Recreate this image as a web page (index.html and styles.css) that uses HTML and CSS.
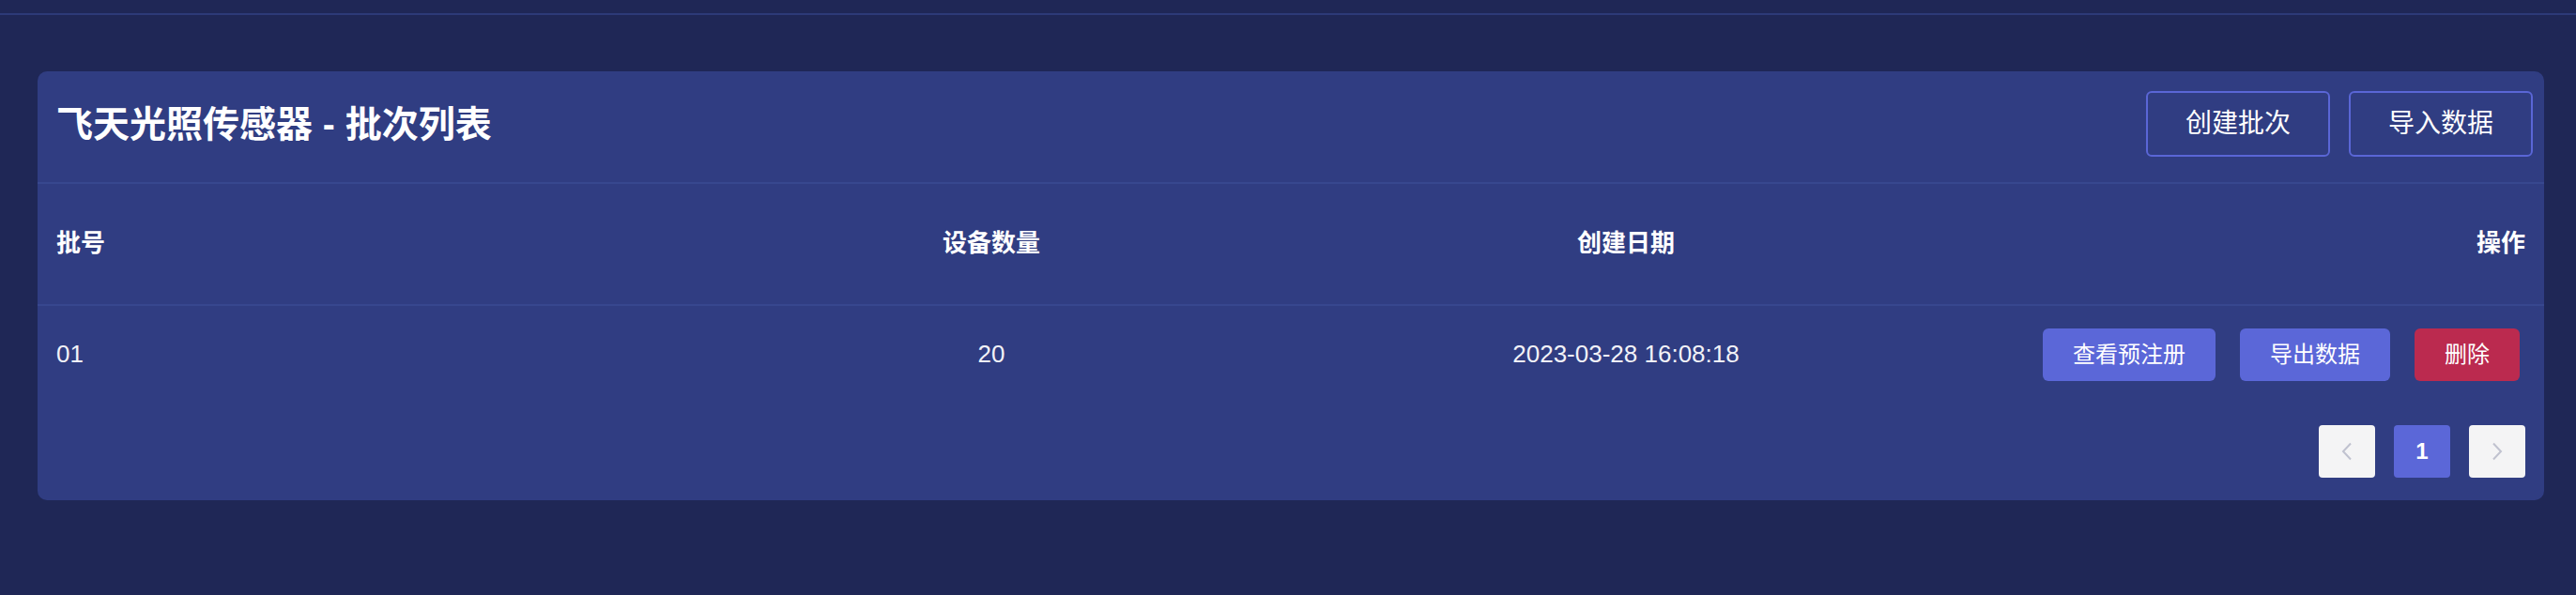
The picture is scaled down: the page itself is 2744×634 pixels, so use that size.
FILE: index.html
```html
<!DOCTYPE html>
<html lang="zh-CN">
<head>
<meta charset="utf-8">
<title>批次列表</title>
<link rel="stylesheet" href="styles.css">
</head>
<body>
<div class="topbar"></div>
<main class="page">
  <section class="card">
    <header class="card-header">
      <h1 class="card-title">飞天光照传感器 - 批次列表</h1>
      <div class="header-actions">
        <button class="btn-outline">创建批次</button>
        <button class="btn-outline">导入数据</button>
      </div>
    </header>
    <div class="table">
      <div class="row head">
        <div class="cell left">批号</div>
        <div class="cell center">设备数量</div>
        <div class="cell center">创建日期</div>
        <div class="cell right">操作</div>
      </div>
      <div class="row data">
        <div class="cell left">01</div>
        <div class="cell center">20</div>
        <div class="cell center">2023-03-28 16:08:18</div>
        <div class="cell right">
          <div class="row-actions">
            <button class="btn btn-primary">查看预注册</button>
            <button class="btn btn-primary">导出数据</button>
            <button class="btn btn-danger">删除</button>
          </div>
        </div>
      </div>
    </div>
    <nav class="pager">
      <button class="pager-item pager-arrow" aria-label="上一页">
        <svg width="12" height="20" viewBox="0 0 12 20"><path d="M10 1.5 L2 10 L10 18.5" fill="none" stroke="#c0c2cf" stroke-width="2"/></svg>
      </button>
      <button class="pager-item pager-active">1</button>
      <button class="pager-item pager-arrow" aria-label="下一页">
        <svg width="12" height="20" viewBox="0 0 12 20"><path d="M2 1.5 L10 10 L2 18.5" fill="none" stroke="#c0c2cf" stroke-width="2"/></svg>
      </button>
    </nav>
  </section>
</main>
</body>
</html>
```

FILE: styles.css
```css
html, body {
  margin: 0;
  padding: 0;
}

body {
  min-height: 100vh;
  background: #1f2756;
  font-family: "Liberation Sans", "Noto Sans CJK SC", sans-serif;
  color: #ffffff;
}

.topbar {
  height: 14px;
  border-bottom: 2px solid #2d3a78;
}

.page {
  padding: 60px 34px 0 40px;
}

.card {
  background: #303d82;
  border-radius: 10px;
  padding-bottom: 24px;
}

.card-header {
  height: 120px;
  box-sizing: border-box;
  padding: 0 12px 6px 20px;
  display: flex;
  align-items: center;
  justify-content: space-between;
  border-bottom: 2px solid #37478f;
}

.card-title {
  margin: 0;
  font-size: 39px;
  font-weight: 700;
  line-height: 1;
  color: #ffffff;
}

.header-actions {
  display: flex;
  gap: 20px;
}

.btn-outline {
  height: 70px;
  padding: 0 40px;
  border: 2px solid #5a66d6;
  border-radius: 6px;
  background: transparent;
  color: #ffffff;
  font-family: inherit;
  font-size: 28px;
  line-height: 1;
}

.row {
  display: grid;
  grid-template-columns: 658px 676px 676px 1fr;
  align-items: center;
  padding: 0 20px;
  box-sizing: border-box;
}

.row.head {
  height: 130px;
  border-bottom: 2px solid #37478f;
  font-size: 26px;
  font-weight: 700;
}

.row.data {
  height: 104px;
  font-size: 26px;
  color: #f2f2f7;
}

.cell {
  line-height: 1.2;
}

.cell.left { text-align: left; }
.cell.center { text-align: center; }
.cell.right { text-align: right; }

.row-actions {
  display: flex;
  justify-content: flex-end;
  gap: 26px;
  padding-right: 6px;
}

.btn {
  height: 56px;
  padding: 0 32px;
  border: none;
  border-radius: 6px;
  color: #ffffff;
  font-family: inherit;
  font-size: 24px;
  line-height: 1;
}

.btn-primary {
  background: #5b67d8;
}

.btn-danger {
  background: #bb2a4f;
}

.pager {
  display: flex;
  justify-content: flex-end;
  gap: 20px;
  margin-top: 23px;
  padding-right: 20px;
}

.pager-item {
  width: 60px;
  height: 56px;
  border: none;
  border-radius: 4px;
  padding: 0;
  display: flex;
  align-items: center;
  justify-content: center;
  font-family: inherit;
}

.pager-arrow {
  background: #f4f4f5;
}

.pager-active {
  background: #5b67d8;
  color: #ffffff;
  font-size: 24px;
  font-weight: 700;
}
```
